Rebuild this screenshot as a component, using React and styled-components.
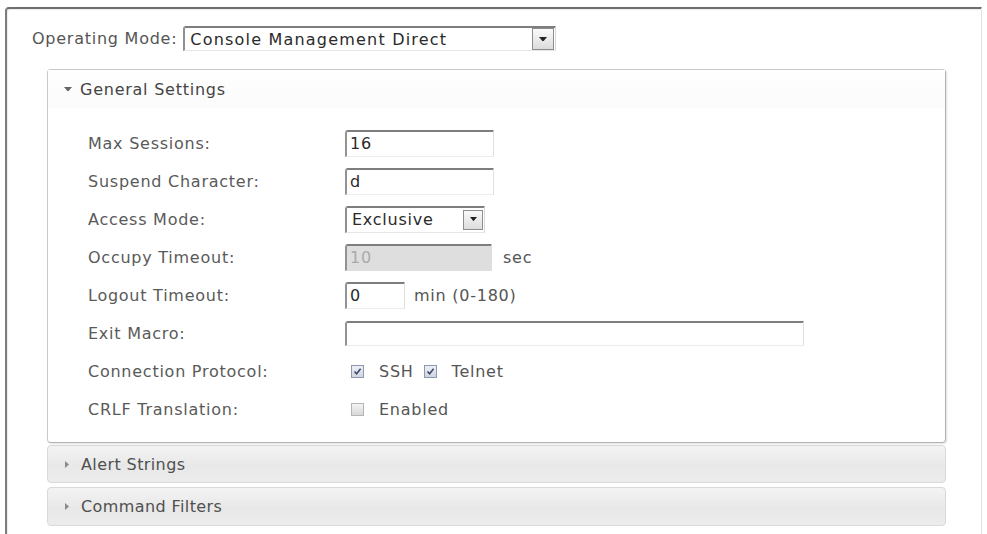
import React from 'react';
import styled, { createGlobalStyle } from 'styled-components';

const GlobalStyle = createGlobalStyle`
  html, body {
    margin: 0;
    padding: 0;
    background: #ffffff;
    overflow: hidden;
  }
  body {
    font-family: 'DejaVu Sans', 'Noto Sans', sans-serif;
    font-size: 16px;
    letter-spacing: 0.75px;
    color: #555;
  }
`;

const Frame = styled.div`
  box-sizing: border-box;
  margin: 7px 0 0 5px;
  width: 977px;
  height: 540px;
  border-top: 2px solid #6e6e6e;
  border-left: 2px solid #7c7c7c;
  border-right: 1px solid #e2e2e2;
  border-top-left-radius: 4px;
  box-shadow: inset 1px 1px 1px rgba(0, 0, 0, 0.08);
  padding: 17px 0 0 25px;
`;

const ModeRow = styled.div`
  display: flex;
  align-items: center;
  gap: 6px;
  height: 25px;
`;

const ModeLabel = styled.span`
  color: #555;
  white-space: nowrap;
`;

const SelectBox = styled.div`
  box-sizing: border-box;
  display: flex;
  align-items: center;
  justify-content: space-between;
  width: ${p => p.$width}px;
  height: ${p => p.$height}px;
  border-top: 2px solid #7e7e7e;
  border-left: 2px solid #909090;
  border-right: 1px solid #d8d8d8;
  border-bottom: 1px solid #e6e6e6;
  border-top-left-radius: 3px;
  padding: 0 1px 0 5px;
  color: #2a2a2a;
  background: #fff;
  letter-spacing: ${p => p.$spacing || 0.75}px;
`;

const DropButton = styled.span`
  box-sizing: border-box;
  display: flex;
  align-items: center;
  justify-content: center;
  width: ${p => p.$size}px;
  height: ${p => p.$size}px;
  border: 1px solid #8d8d8d;
  background: linear-gradient(#fafafa, #dcdcdc);
`;

const Panel = styled.div`
  box-sizing: border-box;
  margin: 18px 0 0 15px;
  width: 899px;
  border: 1px solid #c9c9c9;
  border-right-color: #b0b0b0;
  border-bottom-color: #b4b4b4;
  border-radius: 4px;
  box-shadow: 1px 1px 2px rgba(0, 0, 0, 0.12);
  background: #fff;
  padding-bottom: 14px;
`;

const PanelHeader = styled.div`
  display: flex;
  align-items: center;
  gap: 8px;
  height: 38px;
  padding-left: 16px;
  color: #444;
  background: linear-gradient(#ffffff, #fbfbfb);
`;

const FormBody = styled.div`
  padding: 16px 0 0 40px;
  display: grid;
  grid-template-columns: 257px 1fr;
  grid-auto-rows: 38px;
  align-items: center;
`;

const Label = styled.span`
  color: #5a5a5a;
  white-space: nowrap;
`;

const Field = styled.div`
  display: flex;
  align-items: center;
  color: #555;
`;

const TextInput = styled.input`
  box-sizing: border-box;
  width: ${p => p.$width}px;
  height: ${p => p.$height || 27}px;
  margin: 0;
  padding: 0 3px;
  font: inherit;
  letter-spacing: inherit;
  color: ${p => (p.disabled ? '#aaa' : '#2a2a2a')};
  background: ${p => (p.disabled ? '#dedede' : '#fff')};
  border-top: 2px solid #7e7e7e;
  border-left: 2px solid #939393;
  border-right: 1px solid ${p => (p.disabled ? '#dedede' : '#e0e0e0')};
  border-bottom: 1px solid ${p => (p.disabled ? '#dedede' : '#ececec')};
  border-top-left-radius: 3px;
  outline: none;
`;

const Unit = styled.span`
  color: #555;
  margin-left: ${p => p.$offset}px;
`;

const CheckGroup = styled.label`
  display: flex;
  align-items: center;
  gap: 15px;
  margin-left: ${p => p.$offset || 0}px;
  color: #555;
`;

const CheckBox = styled.span`
  box-sizing: border-box;
  display: flex;
  align-items: center;
  justify-content: center;
  width: 13px;
  height: 13px;
  border: 1px solid ${p => (p.$checked ? '#8e98b0' : '#b5b5b5')};
  background: ${p => (p.$checked ? 'linear-gradient(#eef0f6, #cfd4e2)' : 'linear-gradient(#f4f4f4, #d8d8d8)')};
`;

const Bar = styled.div`
  box-sizing: border-box;
  display: flex;
  align-items: center;
  gap: 12px;
  margin: ${p => p.$top}px 0 0 15px;
  width: 899px;
  height: ${p => p.$height}px;
  padding-left: 17px;
  border: 1px solid #d9d9d9;
  border-radius: 4px;
  background: linear-gradient(#f3f3f3, #e8e8e8 55%, #ececec);
  color: #505050;
  font-size: 16px;
  letter-spacing: 0.4px;
`;

const DownArrow = ({ size = 7, color = '#222' }) => (
  <svg width={size} height={size * 0.6} viewBox="0 0 10 6">
    <path d="M0 0 L10 0 L5 6 Z" fill={color} />
  </svg>
);

const RightArrow = () => (
  <svg width="4" height="7" viewBox="0 0 4 7">
    <path d="M0 0 L4 3.5 L0 7 Z" fill="#8a8a8a" />
  </svg>
);

const Check = ({ checked }) => (
  <CheckBox $checked={checked}>
    {checked && (
      <svg width="9" height="9" viewBox="0 0 9 9">
        <path d="M1.5 4.5 L3.6 6.8 L7.6 1.8" stroke="#3c4664" strokeWidth="1.5" fill="none" />
      </svg>
    )}
  </CheckBox>
);

export default function App() {
  return (
    <>
      <GlobalStyle />
      <Frame>
        <ModeRow>
          <ModeLabel>Operating Mode:</ModeLabel>
          <SelectBox $width={373} $height={25} $spacing={1.2}>
            <span>Console Management Direct</span>
            <DropButton $size={22}>
              <DownArrow size={8} />
            </DropButton>
          </SelectBox>
        </ModeRow>

        <Panel>
          <PanelHeader>
            <DownArrow size={8} color="#666" />
            <span>General Settings</span>
          </PanelHeader>
          <FormBody>
            <Label>Max Sessions:</Label>
            <Field>
              <TextInput readOnly $width={149} defaultValue="16" />
            </Field>

            <Label>Suspend Character:</Label>
            <Field>
              <TextInput readOnly $width={149} defaultValue="d" />
            </Field>

            <Label>Access Mode:</Label>
            <Field>
              <SelectBox $width={140} $height={27}>
                <span>Exclusive</span>
                <DropButton $size={20}>
                  <DownArrow size={7} />
                </DropButton>
              </SelectBox>
            </Field>

            <Label>Occupy Timeout:</Label>
            <Field>
              <TextInput disabled $width={147} defaultValue="10" />
              <Unit $offset={11}>sec</Unit>
            </Field>

            <Label>Logout Timeout:</Label>
            <Field>
              <TextInput readOnly $width={60} defaultValue="0" />
              <Unit $offset={9}>min (0-180)</Unit>
            </Field>

            <Label>Exit Macro:</Label>
            <Field>
              <TextInput readOnly $width={459} $height={25} defaultValue="" />
            </Field>

            <Label>Connection Protocol:</Label>
            <Field>
              <CheckGroup $offset={6}>
                <Check checked />
                <span>SSH</span>
              </CheckGroup>
              <CheckGroup $offset={10}>
                <Check checked />
                <span>Telnet</span>
              </CheckGroup>
            </Field>

            <Label>CRLF Translation:</Label>
            <Field>
              <CheckGroup $offset={6}>
                <Check />
                <span>Enabled</span>
              </CheckGroup>
            </Field>
          </FormBody>
        </Panel>

        <Bar $top={2} $height={38}>
          <RightArrow />
          <span>Alert Strings</span>
        </Bar>
        <Bar $top={4} $height={39}>
          <RightArrow />
          <span>Command Filters</span>
        </Bar>
      </Frame>
    </>
  );
}
